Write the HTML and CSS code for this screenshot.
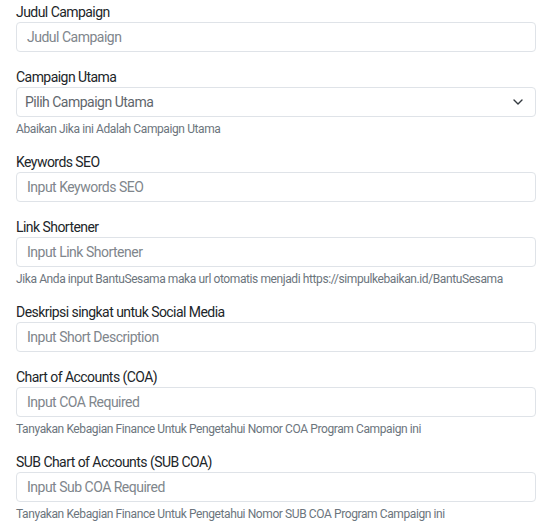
FILE: index.html
```html
<!DOCTYPE html>
<html lang="en">
<head>
    <meta charset="UTF-8">
    <meta name="viewport" content="width=device-width, initial-scale=1.0">
    <title>Campaign Form</title>
    <link rel="stylesheet" href="styles.css">
</head>
<body>
    <form class="campaign-form">
        <div class="form-group">
            <label for="judul">Judul Campaign</label>
            <input type="text" id="judul" class="form-control" placeholder="Judul Campaign">
        </div>
        <div class="form-group">
            <label for="utama">Campaign Utama</label>
            <div class="select-wrap">
                <select id="utama" class="form-control form-select">
                    <option>Pilih Campaign Utama</option>
                </select>
                <svg class="chevron" width="12" height="12" viewBox="0 0 12 12"><path d="M2 4l4 4 4-4" fill="none" stroke="#343a40" stroke-width="1.4" stroke-linecap="round" stroke-linejoin="round"/></svg>
            </div>
            <small class="help">Abaikan Jika ini Adalah Campaign Utama</small>
        </div>
        <div class="form-group">
            <label for="seo">Keywords SEO</label>
            <input type="text" id="seo" class="form-control" placeholder="Input Keywords SEO">
        </div>
        <div class="form-group">
            <label for="link">Link Shortener</label>
            <input type="text" id="link" class="form-control" placeholder="Input Link Shortener">
            <small class="help">Jika Anda input BantuSesama maka url otomatis menjadi https://simpulkebaikan.id/BantuSesama</small>
        </div>
        <div class="form-group">
            <label for="desc">Deskripsi singkat untuk Social Media</label>
            <input type="text" id="desc" class="form-control" placeholder="Input Short Description">
        </div>
        <div class="form-group">
            <label for="coa">Chart of Accounts (COA)</label>
            <input type="text" id="coa" class="form-control" placeholder="Input COA Required">
            <small class="help">Tanyakan Kebagian Finance Untuk Pengetahui Nomor COA Program Campaign ini</small>
        </div>
        <div class="form-group">
            <label for="subcoa">SUB Chart of Accounts (SUB COA)</label>
            <input type="text" id="subcoa" class="form-control" placeholder="Input Sub COA Required">
            <small class="help">Tanyakan Kebagian Finance Untuk Pengetahui Nomor SUB COA Program Campaign ini</small>
        </div>
    </form>
</body>
</html>
```
FILE: styles.css
```css
body {
    font-family: Roboto, "Liberation Sans", sans-serif;
    background-color: #fff;
    color: #212529;
    margin: 0;
    padding: 0;
}
.campaign-form {
    padding: 2px 14px 0 16px;
}
.form-group {
    display: flex;
    flex-direction: column;
    margin-bottom: 15px;
}
label {
    font-size: 14px;
    line-height: 20px;
    letter-spacing: -0.55px;
}
.form-control {
    box-sizing: border-box;
    width: 100%;
    height: 30px;
    padding: 0 10px;
    font-family: inherit;
    font-size: 14px;
    letter-spacing: -0.5px;
    color: #212529;
    background-color: #fff;
    border: 1px solid #dfe3e8;
    border-radius: 4px;
    outline: none;
}
.form-control::placeholder {
    color: #80868c;
}
.select-wrap {
    position: relative;
}
.form-select {
    appearance: none;
    -webkit-appearance: none;
    padding-left: 8px;
    color: #5f666c;
}
.chevron {
    position: absolute;
    right: 12px;
    top: 9px;
}
.help {
    margin-top: 4px;
    font-size: 12px;
    line-height: 16px;
    letter-spacing: -0.4px;
    color: #6c757d;
}
```
